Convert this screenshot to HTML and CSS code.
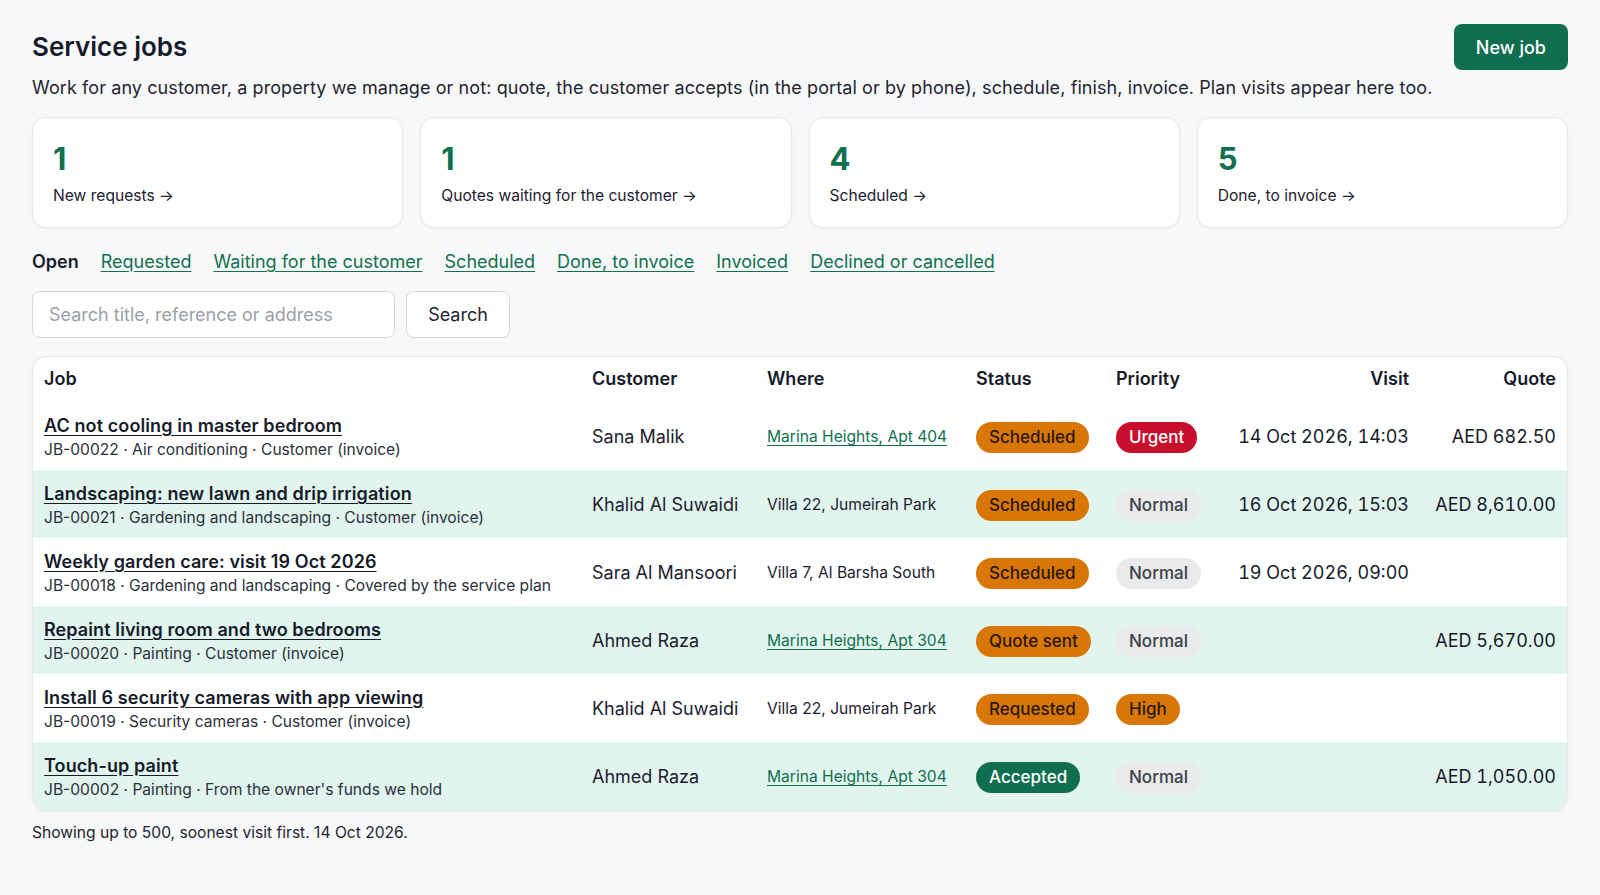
FILE: index.html
```html
<!DOCTYPE html>
<html lang="en">
<head>
    <meta charset="UTF-8">
    <meta name="viewport" content="width=device-width, initial-scale=1.0">
    <title>Service jobs</title>
    <link rel="stylesheet" href="styles.css">
</head>
<body>
    <main class="page">
        <header class="page-head">
            <h1>Service jobs</h1>
            <a href="#" class="btn-primary">New job</a>
        </header>
        <p class="intro">Work for any customer, a property we manage or not: quote, the customer accepts (in the portal or by phone), schedule, finish, invoice. Plan visits appear here too.</p>

        <div class="stats">
            <a href="#" class="stat">
                <span class="stat-num">1</span>
                <span class="stat-label">New requests &rarr;</span>
            </a>
            <a href="#" class="stat">
                <span class="stat-num">1</span>
                <span class="stat-label">Quotes waiting for the customer &rarr;</span>
            </a>
            <a href="#" class="stat">
                <span class="stat-num">4</span>
                <span class="stat-label">Scheduled &rarr;</span>
            </a>
            <a href="#" class="stat">
                <span class="stat-num">5</span>
                <span class="stat-label">Done, to invoice &rarr;</span>
            </a>
        </div>

        <nav class="tabs">
            <span class="tab-current">Open</span>
            <a href="#">Requested</a>
            <a href="#">Waiting for the customer</a>
            <a href="#">Scheduled</a>
            <a href="#">Done, to invoice</a>
            <a href="#">Invoiced</a>
            <a href="#">Declined or cancelled</a>
        </nav>

        <form class="search" onsubmit="return false">
            <input type="text" placeholder="Search title, reference or address">
            <button type="submit">Search</button>
        </form>

        <div class="table-card">
            <table class="jobs">
                <colgroup>
                    <col class="c-job">
                    <col class="c-cust">
                    <col class="c-where">
                    <col class="c-status">
                    <col class="c-prio">
                    <col class="c-visit">
                    <col class="c-quote">
                </colgroup>
                <thead>
                    <tr>
                        <th>Job</th>
                        <th>Customer</th>
                        <th>Where</th>
                        <th>Status</th>
                        <th>Priority</th>
                        <th class="num">Visit</th>
                        <th class="num">Quote</th>
                    </tr>
                </thead>
                <tbody>
                    <tr>
                        <td class="job">
                            <a href="#" class="job-title">AC not cooling in master bedroom</a>
                            <div class="job-meta">JB-00022 · Air conditioning · Customer (invoice)</div>
                        </td>
                        <td class="cust">Sana Malik</td>
                        <td class="where"><a href="#">Marina Heights, Apt 404</a></td>
                        <td><span class="pill pill-amber">Scheduled</span></td>
                        <td><span class="pill pill-red">Urgent</span></td>
                        <td class="num">14 Oct 2026, 14:03</td>
                        <td class="num">AED 682.50</td>
                    </tr>
                    <tr>
                        <td class="job">
                            <a href="#" class="job-title">Landscaping: new lawn and drip irrigation</a>
                            <div class="job-meta">JB-00021 · Gardening and landscaping · Customer (invoice)</div>
                        </td>
                        <td class="cust">Khalid Al Suwaidi</td>
                        <td class="where">Villa 22, Jumeirah Park</td>
                        <td><span class="pill pill-amber">Scheduled</span></td>
                        <td><span class="pill pill-grey">Normal</span></td>
                        <td class="num">16 Oct 2026, 15:03</td>
                        <td class="num">AED 8,610.00</td>
                    </tr>
                    <tr>
                        <td class="job">
                            <a href="#" class="job-title">Weekly garden care: visit 19 Oct 2026</a>
                            <div class="job-meta">JB-00018 · Gardening and landscaping · Covered by the service plan</div>
                        </td>
                        <td class="cust">Sara Al Mansoori</td>
                        <td class="where">Villa 7, Al Barsha South</td>
                        <td><span class="pill pill-amber">Scheduled</span></td>
                        <td><span class="pill pill-grey">Normal</span></td>
                        <td class="num">19 Oct 2026, 09:00</td>
                        <td class="num"></td>
                    </tr>
                    <tr>
                        <td class="job">
                            <a href="#" class="job-title">Repaint living room and two bedrooms</a>
                            <div class="job-meta">JB-00020 · Painting · Customer (invoice)</div>
                        </td>
                        <td class="cust">Ahmed Raza</td>
                        <td class="where"><a href="#">Marina Heights, Apt 304</a></td>
                        <td><span class="pill pill-amber">Quote sent</span></td>
                        <td><span class="pill pill-grey">Normal</span></td>
                        <td class="num"></td>
                        <td class="num">AED 5,670.00</td>
                    </tr>
                    <tr>
                        <td class="job">
                            <a href="#" class="job-title">Install 6 security cameras with app viewing</a>
                            <div class="job-meta">JB-00019 · Security cameras · Customer (invoice)</div>
                        </td>
                        <td class="cust">Khalid Al Suwaidi</td>
                        <td class="where">Villa 22, Jumeirah Park</td>
                        <td><span class="pill pill-amber">Requested</span></td>
                        <td><span class="pill pill-amber">High</span></td>
                        <td class="num"></td>
                        <td class="num"></td>
                    </tr>
                    <tr>
                        <td class="job">
                            <a href="#" class="job-title">Touch-up paint</a>
                            <div class="job-meta">JB-00002 · Painting · From the owner's funds we hold</div>
                        </td>
                        <td class="cust">Ahmed Raza</td>
                        <td class="where"><a href="#">Marina Heights, Apt 304</a></td>
                        <td><span class="pill pill-green">Accepted</span></td>
                        <td><span class="pill pill-grey">Normal</span></td>
                        <td class="num"></td>
                        <td class="num">AED 1,050.00</td>
                    </tr>
                </tbody>
            </table>
        </div>

        <p class="foot-note">Showing up to 500, soonest visit first. 14 Oct 2026.</p>
    </main>
</body>
</html>
```

FILE: styles.css
```css
body {
    margin: 0;
    font-family: Inter, "Noto Sans", sans-serif;
    background-color: #f7f8f9;
    color: #161b2a;
}
.page {
    padding: 24px 32px 40px;
}
.page-head {
    display: flex;
    align-items: center;
    justify-content: space-between;
}
.page-head h1 {
    margin: 0;
    font-size: 26px;
    font-weight: 600;
    line-height: 32px;
}
.btn-primary {
    display: flex;
    align-items: center;
    height: 46px;
    padding: 0 22px;
    box-sizing: border-box;
    background-color: #0f6e4f;
    color: #fff;
    border-radius: 8px;
    font-size: 18px;
    font-weight: 500;
    text-decoration: none;
}
.intro {
    margin: 4px 0 0;
    font-size: 18px;
    line-height: 27px;
    letter-spacing: 0.09px;
    color: #1f2430;
}
.stats {
    display: grid;
    grid-template-columns: repeat(4, 1fr);
    gap: 17px;
    margin-top: 16px;
}
.stat {
    display: flex;
    flex-direction: column;
    gap: 7px;
    height: 111px;
    box-sizing: border-box;
    padding: 23px 20px 20px;
    background-color: #fff;
    border: 1px solid #e6e8eb;
    border-radius: 14px;
    box-shadow: 0 1px 3px rgba(0, 0, 0, 0.05);
    text-decoration: none;
    color: #1c2130;
}
.stat-num {
    font-size: 31px;
    font-weight: 700;
    line-height: 36px;
    color: #11704f;
}
.stat-label {
    font-size: 15.6px;
    line-height: 24px;
}
.tabs {
    display: flex;
    gap: 22px;
    margin-top: 20px;
    font-size: 18px;
    line-height: 27px;
}
.tabs a {
    color: #11704f;
    text-decoration: underline;
    text-underline-offset: 3px;
}
.tab-current {
    font-weight: 600;
    color: #161b2a;
}
.search {
    display: flex;
    gap: 11px;
    margin-top: 16px;
}
.search input {
    width: 363px;
    height: 47px;
    box-sizing: border-box;
    padding: 0 16px;
    border: 1px solid #d4d8dd;
    border-radius: 8px;
    font-family: inherit;
    font-size: 18px;
    color: #161b2a;
    background-color: #fff;
}
.search input::placeholder {
    color: #9aa0a8;
}
.search button {
    width: 104px;
    height: 47px;
    border: 1px solid #d4d8dd;
    border-radius: 8px;
    background-color: #fff;
    font-family: inherit;
    font-size: 18px;
    color: #1f2430;
    cursor: pointer;
}
.table-card {
    margin-top: 18px;
    background-color: #fff;
    border: 1px solid #e6e8eb;
    border-radius: 14px;
    box-shadow: 0 1px 3px rgba(0, 0, 0, 0.05);
    overflow: hidden;
}
.jobs {
    width: 100%;
    border-collapse: collapse;
    table-layout: fixed;
}
.c-job { width: 548px; }
.c-cust { width: 175px; }
.c-where { width: 209px; }
.c-status { width: 140px; }
.c-prio { width: 115px; }
.c-visit { width: 200px; }
.c-quote { width: 147px; }
.jobs th {
    text-align: left;
    font-size: 18px;
    font-weight: 600;
    line-height: 22px;
    padding: 11px 11px 12px;
    color: #161b2a;
}
.jobs td {
    height: 68px;
    box-sizing: border-box;
    padding: 11px 11px 9px;
    vertical-align: middle;
    font-size: 18px;
    line-height: 24px;
    white-space: nowrap;
}
.jobs td.job {
    padding: 12px 11px 8px;
}
.jobs tbody tr:nth-child(even) {
    background-color: #e1f4ee;
}
.jobs .num {
    text-align: right;
    font-variant-numeric: tabular-nums;
}
.job-title {
    font-size: 18px;
    font-weight: 600;
    letter-spacing: 0.1px;
    color: #161b2a;
    text-decoration: underline;
    text-underline-offset: 3px;
}
.job-meta {
    font-size: 15.6px;
    color: #2b303b;
}
.cust {
    color: #1c2130;
}
.jobs td.where {
    font-size: 15.6px;
    color: #1c2130;
}
.where a {
    color: #11704f;
    text-decoration: underline;
    text-underline-offset: 3px;
}
.pill {
    display: inline-block;
    height: 31px;
    line-height: 31px;
    padding: 0 13px;
    border-radius: 16px;
    font-size: 17px;
    font-weight: 500;
}
.pill-amber {
    background-color: #d97706;
    color: #2a1800;
}
.pill-red {
    background-color: #c8102e;
    color: #fff;
}
.pill-grey {
    background-color: #e9eaeb;
    color: #3a3f49;
}
.pill-green {
    background-color: #0f6e4f;
    color: #fff;
}
.foot-note {
    margin: 10px 0 0;
    font-size: 15.6px;
    line-height: 24px;
    color: #1f2430;
}
```
